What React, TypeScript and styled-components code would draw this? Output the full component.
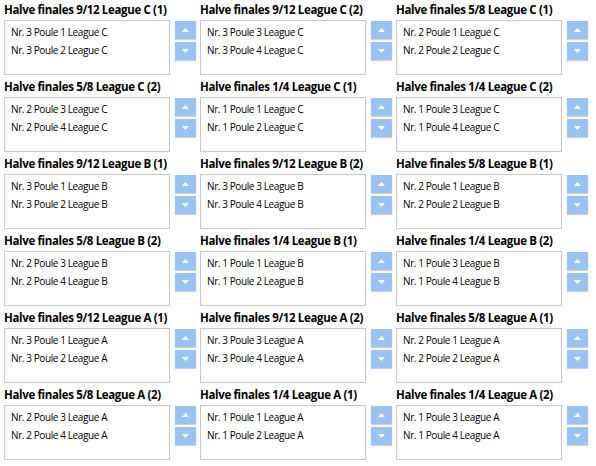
import React from 'react';
import styled, { createGlobalStyle } from 'styled-components';

const GlobalStyle = createGlobalStyle`
  body {
    margin: 0;
    background: #ffffff;
    font-family: 'Open Sans', 'Noto Sans', sans-serif;
    color: #000000;
  }
`;

const Board = styled.div`
  display: grid;
  grid-template-columns: repeat(3, 196px);
  grid-auto-rows: 77px;
  padding-left: 4px;
`;

const Cell = styled.div`
  display: flex;
  flex-direction: column;
`;

const Title = styled.div`
  height: 20px;
  font-size: 11.5px;
  font-weight: 700;
  line-height: 19px;
  white-space: nowrap;
  letter-spacing: -0.35px;
`;

const Row = styled.div`
  display: flex;
  gap: 5px;
`;

const ListBox = styled.ul`
  box-sizing: border-box;
  width: 166px;
  height: 55px;
  margin: 0;
  padding: 2px 0 0 6px;
  list-style: none;
  border: 1px solid #c8c8c8;
  background: #ffffff;
`;

const Item = styled.li`
  height: 18px;
  line-height: 18px;
  font-size: 10px;
  letter-spacing: -0.4px;
  white-space: nowrap;
`;

const Buttons = styled.div`
  display: flex;
  flex-direction: column;
  gap: 3px;
  padding-top: 1px;
`;

const MoveButton = styled.button`
  width: 21px;
  height: 18px;
  padding: 0;
  border: none;
  background: #99c3f2;
  box-shadow: 0 1px 1px rgba(0, 0, 0, 0.18);
  display: flex;
  align-items: center;
  justify-content: center;
`;

const Arrow = ({ dir }: { dir: 'up' | 'down' }) => (
  <svg width='7' height='4' viewBox='0 0 7 4'>
    {dir === 'up' ? <polygon points='3.5,0 7,4 0,4' fill='#fff' /> : <polygon points='0,0 7,0 3.5,4' fill='#fff' />}
  </svg>
);

type Match = { title: string; entries: [string, string] };

const leagues = ['C', 'B', 'A'];

const buildMatches = (): Match[] => {
  const list: Match[] = [];
  for (let league of leagues) {
    const l = `League ${league}`;
    list.push({ title: `Halve finales 9/12 ${l} (1)`, entries: [`Nr. 3 Poule 1 ${l}`, `Nr. 3 Poule 2 ${l}`] });
    list.push({ title: `Halve finales 9/12 ${l} (2)`, entries: [`Nr. 3 Poule 3 ${l}`, `Nr. 3 Poule 4 ${l}`] });
    list.push({ title: `Halve finales 5/8 ${l} (1)`, entries: [`Nr. 2 Poule 1 ${l}`, `Nr. 2 Poule 2 ${l}`] });
    list.push({ title: `Halve finales 5/8 ${l} (2)`, entries: [`Nr. 2 Poule 3 ${l}`, `Nr. 2 Poule 4 ${l}`] });
    list.push({ title: `Halve finales 1/4 ${l} (1)`, entries: [`Nr. 1 Poule 1 ${l}`, `Nr. 1 Poule 2 ${l}`] });
    list.push({ title: `Halve finales 1/4 ${l} (2)`, entries: [`Nr. 1 Poule 3 ${l}`, `Nr. 1 Poule 4 ${l}`] });
  }
  return list;
};

const matches = buildMatches();

export default function App() {
  return (
    <>
      <GlobalStyle />
      <Board>
        {matches.map(m => (
          <Cell key={m.title}>
            <Title>{m.title}</Title>
            <Row>
              <ListBox>
                {m.entries.map(e => (
                  <Item key={e}>{e}</Item>
                ))}
              </ListBox>
              <Buttons>
                <MoveButton>
                  <Arrow dir='up' />
                </MoveButton>
                <MoveButton>
                  <Arrow dir='down' />
                </MoveButton>
              </Buttons>
            </Row>
          </Cell>
        ))}
      </Board>
    </>
  );
}
